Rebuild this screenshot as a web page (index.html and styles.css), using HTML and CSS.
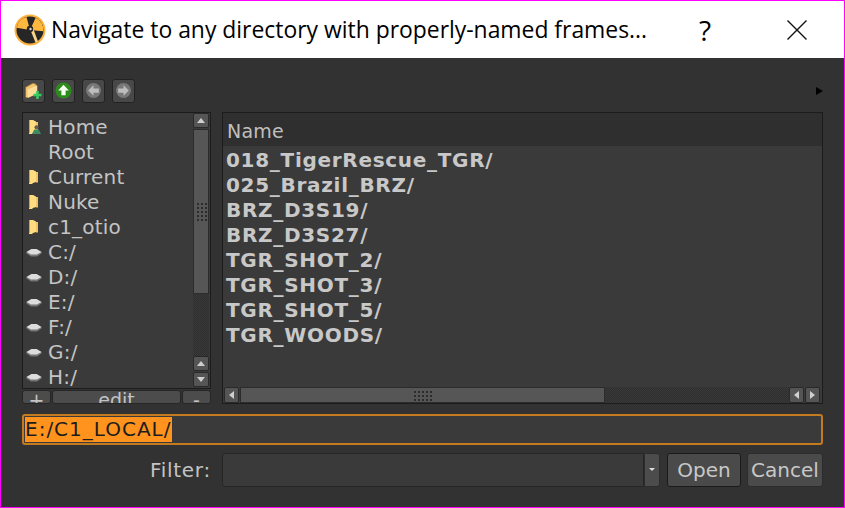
FILE: index.html
```html
<!DOCTYPE html>
<html lang="en">
<head>
    <meta charset="UTF-8">
    <title>Navigate to any directory</title>
    <link rel="stylesheet" href="styles.css">
</head>
<body>
    <svg class="defs" width="0" height="0">
        <symbol id="folder" viewBox="0 0 16 14">
            <path d="M3 0h4l3 1.500V12l-3 1-1 1H3z" fill="#ffdc80"/>
            <path d="M3 0h1v13H3z" fill="#c9a24a"/>
            <path d="M10 2h2v10.500h-2z" fill="#f0c266"/>
        </symbol>
        <symbol id="drive" viewBox="0 0 16 14">
            <path d="M0.500 7l5-3h5l5 3v1.500L11 11.500H5L0.500 8.500z" fill="#757575"/>
            <path d="M0.500 7l5-3h5l5 3-4.500 2.500H5z" fill="#dcdcdc"/>
            <path d="M3 8.500l2 1h5l1-.5v1H5z" fill="#a8a8a8"/>
        </symbol>
    </svg>
    <header class="titlebar">
        <svg class="logo" viewBox="0 0 32 32">
            <circle cx="16" cy="16" r="15.500" fill="#fbb03b"/>
            <circle cx="16" cy="16" r="13.500" fill="#262626"/>
            <path d="M16 16L2.700 13.700A13.500 13.500 0 0 1 12.500 3z" fill="#fdb93f"/>
            <path d="M16 16L21.700 3.800A13.500 13.500 0 0 1 29.400 17.200z" fill="#fdb93f"/>
            <path d="M16 15l3-1 5 13.500-2.500 1z" fill="#f7d48a"/>
            <circle cx="16" cy="15" r="3.200" fill="#262626"/>
            <circle cx="16.500" cy="15" r="1.200" fill="#d9d9d9"/>
        </svg>
        <span class="title">Navigate to any directory with properly-named frames...</span>
        <span class="help">?</span>
        <svg class="close" viewBox="0 0 20 20"><path d="M0.500 0.500L19.500 19.500M19.500 0.500L0.500 19.500" stroke="#111" stroke-width="1.400" fill="none"/></svg>
    </header>

    <main class="dialog">
        <div class="toolbar">
            <button class="tool">
                <svg viewBox="0 0 16 16" class="tool-icon">
                    <path d="M0.500 5l7-4 3 1v8l-9 5-1-1z" fill="#f2c46e" stroke="#8a6a30" stroke-width=".7"/>
                    <path d="M2.500 7l9-4v8l-9 4z" fill="#ffdf98"/>
                    <path d="M10.500 8.500h2.500V11h2.500v2.500H13V16h-2.500v-2.500H8V11h2.500z" fill="#35c95f"/>
                </svg>
            </button>
            <button class="tool">
                <svg viewBox="0 0 16 16" class="tool-icon">
                    <circle cx="8" cy="8" r="7.500" fill="#2f8a1e"/>
                    <path d="M8 2.500L13 8h-3v4.500H6V8H3z" fill="#f4fff0"/>
                </svg>
            </button>
            <button class="tool">
                <svg viewBox="0 0 16 16" class="tool-icon">
                    <circle cx="8" cy="8" r="7" fill="#787878"/>
                    <path d="M3 8l5-5v3h5v4H8v3z" fill="#bdbdbd"/>
                </svg>
            </button>
            <button class="tool">
                <svg viewBox="0 0 16 16" class="tool-icon">
                    <circle cx="8" cy="8" r="7" fill="#787878"/>
                    <path d="M13 8L8 3v3H3v4h5v3z" fill="#bdbdbd"/>
                </svg>
            </button>
            <span class="more"></span>
        </div>

        <div class="panes">
            <div class="side">
                <div class="panel places">
                    <ul class="place-list">
                        <li><svg class="ico"><use href="#folder"/></svg><svg class="user" viewBox="0 0 8 8"><circle cx="4" cy="2" r="1.800" fill="#6b5a48"/><path d="M0 8l2-4h4l2 4z" fill="#3f8a63"/></svg>Home</li>
                        <li><span class="ico"></span>Root</li>
                        <li><svg class="ico"><use href="#folder"/></svg>Current</li>
                        <li><svg class="ico"><use href="#folder"/></svg>Nuke</li>
                        <li><svg class="ico"><use href="#folder"/></svg>c1_otio</li>
                        <li><svg class="ico"><use href="#drive"/></svg>C:/</li>
                        <li><svg class="ico"><use href="#drive"/></svg>D:/</li>
                        <li><svg class="ico"><use href="#drive"/></svg>E:/</li>
                        <li><svg class="ico"><use href="#drive"/></svg>F:/</li>
                        <li><svg class="ico"><use href="#drive"/></svg>G:/</li>
                        <li><svg class="ico"><use href="#drive"/></svg>H:/</li>
                    </ul>
                    <div class="vscroll">
                        <span class="sbtn arrow-up"></span>
                        <span class="vhandle"><span class="grip"></span></span>
                        <span class="trough"></span>
                        <span class="sbtn arrow-up"></span>
                        <span class="sbtn arrow-down"></span>
                    </div>
                </div>
                <div class="edit-row">
                    <span class="mini plus">+</span>
                    <span class="mini edit">edit</span>
                    <span class="mini minus">-</span>
                </div>
            </div>

            <div class="panel files">
                <div class="files-head">Name</div>
                <ul class="file-list">
                    <li>018_TigerRescue_TGR/</li>
                    <li>025_Brazil_BRZ/</li>
                    <li>BRZ_D3S19/</li>
                    <li>BRZ_D3S27/</li>
                    <li>TGR_SHOT_2/</li>
                    <li>TGR_SHOT_3/</li>
                    <li>TGR_SHOT_5/</li>
                    <li>TGR_WOODS/</li>
                </ul>
                <div class="hscroll">
                    <span class="sbtn-h arrow-left"></span>
                    <span class="hhandle"><span class="grip-h"></span></span>
                    <span class="trough-h"></span>
                    <span class="sbtn-h arrow-left"></span>
                    <span class="sbtn-h arrow-right"></span>
                </div>
            </div>
        </div>

        <div class="path"><span class="selected">E:/C1_LOCAL/</span></div>

        <div class="filter-row">
            <label class="filter-label">Filter:</label>
            <div class="combo"><span class="combo-field"></span><span class="combo-btn"></span></div>
            <button class="btn btn-open">Open</button>
            <button class="btn btn-cancel">Cancel</button>
        </div>
    </main>
</body>
</html>
```

FILE: styles.css
```css
html, body {
    margin: 0;
    padding: 0;
    height: 100%;
}

body {
    box-sizing: border-box;
    height: 508px;
    border: 1px solid #ff00ff;
    background-color: #323232;
    color: #c8c8c8;
    font-family: 'DejaVu Sans', sans-serif;
    overflow: hidden;
}

.defs {
    display: block;
    height: 0;
}

ul {
    list-style: none;
    margin: 0;
    padding: 0;
}

/* title bar */
.titlebar {
    display: flex;
    align-items: center;
    height: 57px;
    background-color: #fff;
    color: #000;
    font-family: 'Open Sans', sans-serif;
}

.logo {
    width: 32px;
    height: 32px;
    margin-left: 13px;
}

.title {
    margin-left: 5px;
    font-size: 22.9px;
    white-space: nowrap;
    width: 628px;
}

.help {
    font-size: 28px;
    width: 20px;
    text-align: center;
    margin-left: 16px;
}

.close {
    width: 20px;
    height: 20px;
    margin-left: 72px;
}

/* dialog */
.dialog {
    padding: 20px 21px 0 21px;
}

.toolbar {
    display: flex;
    align-items: center;
    gap: 7px;
    height: 25px;
    margin-bottom: 9px;
}

.tool {
    box-sizing: border-box;
    width: 23px;
    height: 24px;
    padding: 0;
    display: flex;
    align-items: center;
    justify-content: center;
    background-color: #484848;
    border: 1px solid #222;
    border-radius: 3px;
}

.tool-icon {
    width: 17px;
    height: 17px;
    flex: none;
}

.more {
    margin-left: auto;
    margin-right: 0;
    width: 0;
    height: 0;
    border-left: 7px solid #000;
    border-top: 4px solid transparent;
    border-bottom: 4px solid transparent;
}

.panes {
    display: flex;
    gap: 11px;
    height: 292px;
}

.panel {
    box-sizing: border-box;
    border: 1px solid #1c1c1c;
    background-color: #3a3a3a;
}

/* left side */
.side {
    width: 189px;
    flex: none;
}

.places {
    display: flex;
    height: 277px;
    overflow: hidden;
}

.place-list {
    flex: 1;
    padding-top: 1px;
    font-size: 20px;
    letter-spacing: 0.2px;
    color: #c4c4c4;
}

.place-list li {
    position: relative;
    display: flex;
    align-items: center;
    height: 25px;
}

.ico {
    width: 16px;
    height: 14px;
    margin-left: 3px;
    margin-right: 6px;
    flex: none;
}

.user {
    position: absolute;
    left: 9px;
    top: 11px;
    width: 9px;
    height: 9px;
}

.vscroll {
    width: 16px;
    display: flex;
    flex-direction: column;
    flex: none;
    margin-right: 1px;
}

.sbtn {
    box-sizing: border-box;
    height: 15px;
    flex: none;
    margin-bottom: 1px;
    background-color: #555;
    border: 1px solid #292929;
    border-radius: 2px;
    display: flex;
    align-items: center;
    justify-content: center;
}

.arrow-up::after {
    content: "";
    border-left: 4px solid transparent;
    border-right: 4px solid transparent;
    border-bottom: 5px solid #cfcfcf;
}

.arrow-down::after {
    content: "";
    border-left: 4px solid transparent;
    border-right: 4px solid transparent;
    border-top: 5px solid #cfcfcf;
}

.vhandle {
    box-sizing: border-box;
    height: 165px;
    flex: none;
    background-color: #565656;
    border: 1px solid #2c2c2c;
    display: flex;
    align-items: center;
    justify-content: center;
}

.grip {
    width: 11px;
    height: 19px;
    background-image: radial-gradient(#2c2c2c 1px, transparent 1px);
    background-size: 4px 4px;
}

.trough {
    flex: 1;
    background: repeating-conic-gradient(#2e2e2e 0 25%, #3a3a3a 0 50%) 0 0 / 2px 2px;
}

.edit-row {
    display: flex;
    gap: 1px;
    height: 14px;
    margin-top: 1px;
    font-size: 19px;
}

.mini {
    box-sizing: border-box;
    height: 14px;
    background-color: #4c4c4c;
    border: 1px solid #262626;
    border-radius: 3px;
    overflow: hidden;
    text-align: center;
    line-height: 19px;
    color: #c4c4c4;
}

.plus {
    width: 29px;
}

.edit {
    flex: 1;
}

.minus {
    width: 29px;
}

/* right side */
.files {
    flex: 1;
    display: flex;
    flex-direction: column;
}

.files-head {
    height: 33px;
    flex: none;
    padding-left: 4px;
    line-height: 36px;
    font-size: 19px;
    letter-spacing: 0.2px;
    color: #bfbfbf;
    background-color: #2f2f2f;
}

.file-list {
    flex: 1;
    padding-top: 2px;
    padding-left: 3px;
    font-size: 20px;
    letter-spacing: 0.7px;
    font-weight: bold;
    color: #c8c8c8;
}

.file-list li {
    height: 25px;
    line-height: 25px;
}

.hscroll {
    display: flex;
    height: 16px;
    flex: none;
    margin: 0 1px 0 1px;
}

.sbtn-h {
    box-sizing: border-box;
    width: 15px;
    flex: none;
    margin-right: 1px;
    background-color: #555;
    border: 1px solid #292929;
    border-radius: 2px;
    display: flex;
    align-items: center;
    justify-content: center;
}

.arrow-left::after {
    content: "";
    border-top: 4px solid transparent;
    border-bottom: 4px solid transparent;
    border-right: 5px solid #cfcfcf;
}

.arrow-right::after {
    content: "";
    border-top: 4px solid transparent;
    border-bottom: 4px solid transparent;
    border-left: 5px solid #cfcfcf;
}

.hhandle {
    box-sizing: border-box;
    width: 365px;
    flex: none;
    background-color: #565656;
    border: 1px solid #2c2c2c;
    display: flex;
    align-items: center;
    justify-content: center;
}

.grip-h {
    width: 19px;
    height: 11px;
    background-image: radial-gradient(#2c2c2c 1px, transparent 1px);
    background-size: 4px 4px;
}

.trough-h {
    flex: 1;
    background: repeating-conic-gradient(#2e2e2e 0 25%, #3a3a3a 0 50%) 0 0 / 2px 2px;
}

/* path field */
.path {
    box-sizing: border-box;
    height: 31px;
    margin-top: 10px;
    padding: 1px;
    border: 2px solid #c47a1e;
    border-radius: 3px;
    background-color: #3a3a3a;
    display: flex;
    align-items: center;
    font-size: 20px;
    letter-spacing: 1px;
}

.selected {
    background-color: #ff931e;
    color: #1d1d1d;
    height: 25px;
    line-height: 25px;
}

/* bottom row */
.filter-row {
    display: flex;
    align-items: center;
    height: 35px;
    margin-top: 7px;
    font-size: 20px;
    letter-spacing: 0.7px;
}

.filter-label {
    margin-left: 128px;
    width: 72px;
    color: #c4c4c4;
}

.combo {
    display: flex;
    width: 438px;
    height: 34px;
}

.combo-field {
    flex: 1;
    background-color: #3a3a3a;
    border: 1px solid #262626;
    border-radius: 3px 0 0 3px;
}

.combo-btn {
    box-sizing: border-box;
    width: 16px;
    background-color: #4c4c4c;
    border: 1px solid #2c2c2c;
    border-radius: 0 3px 3px 0;
    display: flex;
    align-items: center;
    justify-content: center;
}

.combo-btn::after {
    content: "";
    border-left: 3px solid transparent;
    border-right: 3px solid transparent;
    border-top: 3px solid #ddd;
}

.btn {
    box-sizing: border-box;
    height: 34px;
    padding: 0;
    background-color: #4a4a4a;
    border: 1px solid #262626;
    border-radius: 3px;
    color: #c8c8c8;
    font-family: 'DejaVu Sans', sans-serif;
    font-size: 20px;
}

.btn-open {
    width: 74px;
    margin-left: 7px;
    border-color: #1a1a1a;
}

.btn-cancel {
    width: 76px;
    margin-left: 6px;
    border-color: #2c2c2c;
}
```
